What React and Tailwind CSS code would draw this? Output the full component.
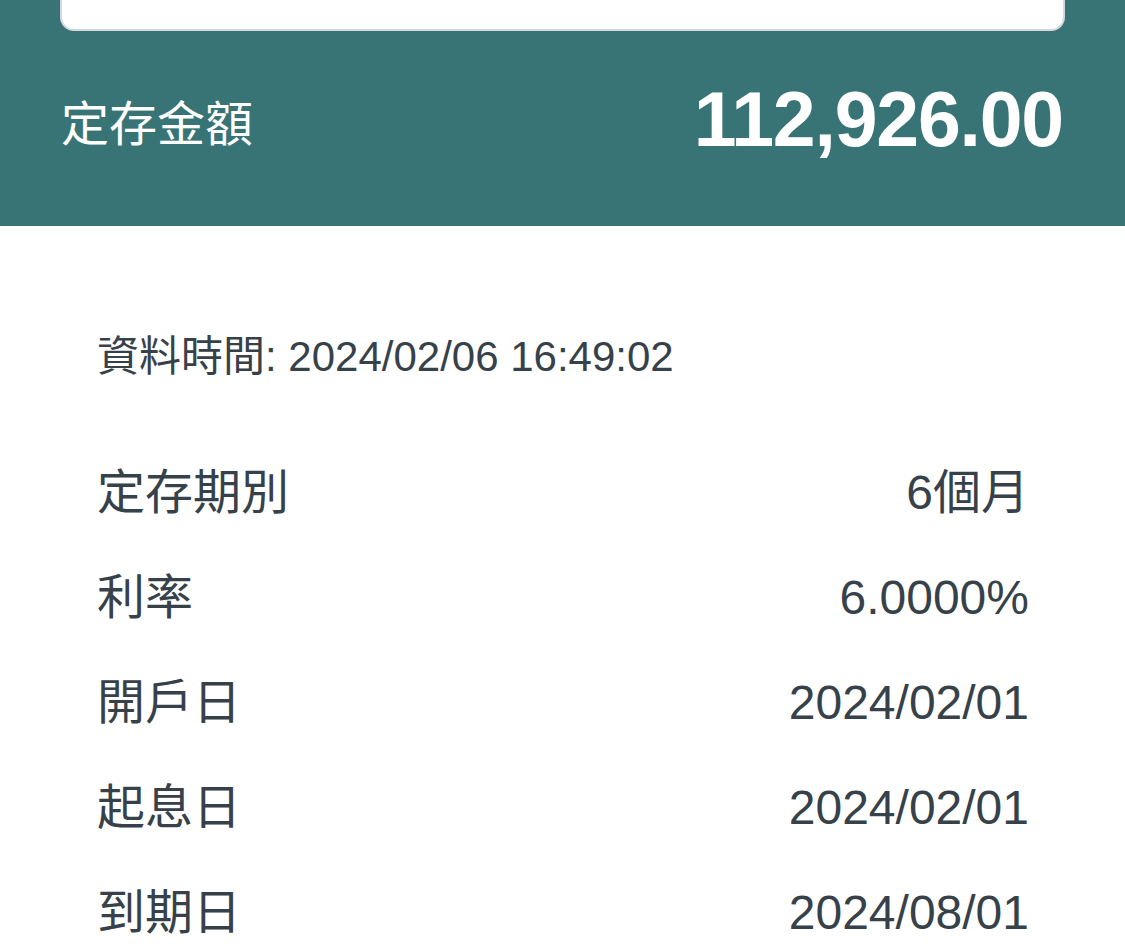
export default function App() {
  const rows = [
    ["定存期別", "6個月"],
    ["利率", "6.0000%"],
    ["開戶日", "2024/02/01"],
    ["起息日", "2024/02/01"],
    ["到期日", "2024/08/01"],
  ];
  const font = { fontFamily: '"Liberation Sans", Arial, "Noto Sans CJK TC", sans-serif' };
  return (
    <div className="w-[1125px] h-[952px] bg-white overflow-hidden" style={font}>
      <div className="bg-[#387475] h-[226px] px-[60px] flex flex-col">
        <div className="h-[29px] bg-white border-2 border-t-0 border-[#d3d8dc] rounded-b-[14px] shrink-0 box-content" />
        <div className="flex items-center justify-between pl-[1px] pr-[2px] mt-[50px]">
          <span className="text-white text-[48px] leading-none mt-[10px]">定存金額</span>
          <span className="text-white text-[77px] font-bold leading-none tracking-[-1.2px]">112,926.00</span>
        </div>
      </div>
      <div className="pl-[97px] pr-[96px] pt-[110px] text-[#37414a]">
        <div className="text-[42px] leading-none h-[42px]">資料時間: 2024/02/06 16:49:02</div>
        <div className="mt-[91px] flex flex-col gap-[57px]">
          {rows.map(([k, v]) => (
            <div key={k} className="flex justify-between items-center text-[48px] leading-none h-[48px]">
              <span>{k}</span>
              <span>{v}</span>
            </div>
          ))}
        </div>
      </div>
    </div>
  );
}
